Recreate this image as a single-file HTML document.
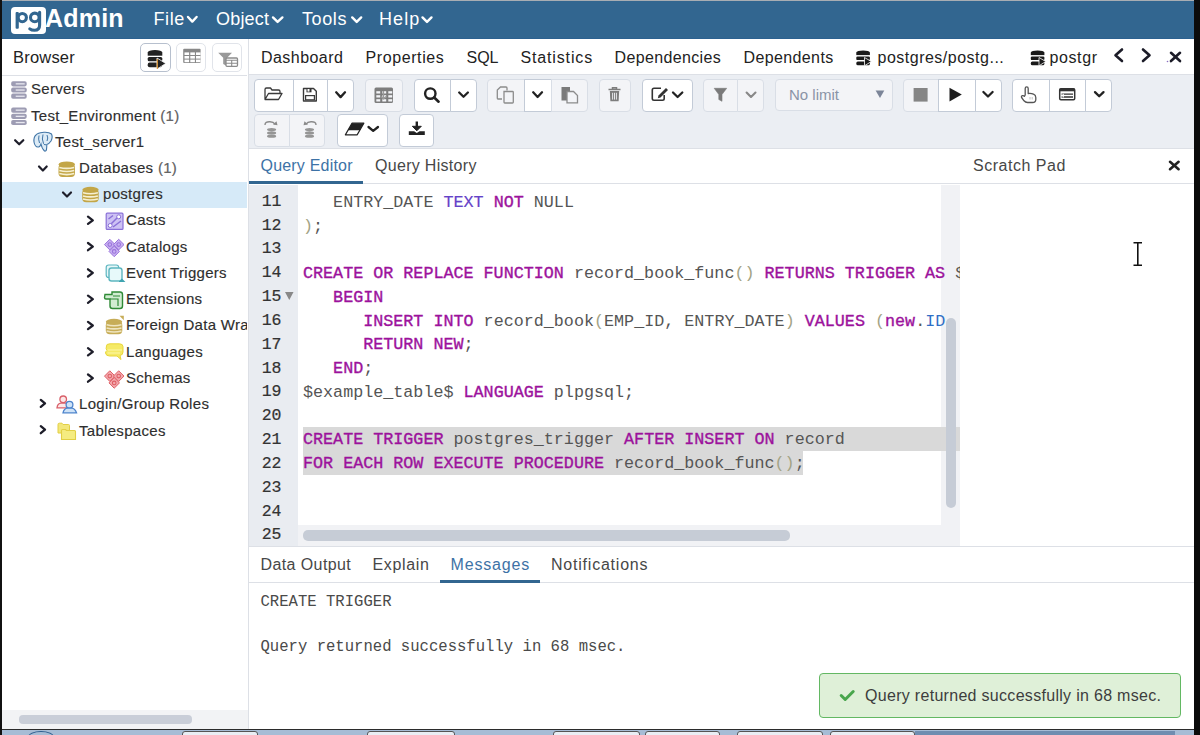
<!DOCTYPE html>
<html><head><meta charset="utf-8">
<style>
*{box-sizing:border-box;margin:0;padding:0}
html,body{width:1200px;height:735px;overflow:hidden;background:#fff;font-family:"Liberation Sans",sans-serif;color:#222}
.a{position:absolute}
#topline{left:0;top:0;width:1200px;height:1px;background:#a8adb3}
#lborder{left:0;top:0;width:1.6px;height:735px;background:#111}
#rborder{left:1194px;top:0;width:6px;height:735px;background:#0b0b0b}
#hdr{left:2px;top:1px;width:1192px;height:38px;background:#326690;border-bottom:1px solid #2c6190}
.logo{left:11px;top:7px;width:35px;height:27px;background:#fff;border-radius:4px}
.menu{color:#fff;font-size:18px;top:9px}
.chev{position:absolute}
/* browser panel */
#bpanel{left:2px;top:39px;width:245px;height:692px;background:#fff}
.tree{font-size:15px;letter-spacing:0.3px;color:#2e2e2e;white-space:nowrap;-webkit-text-stroke:0.15px #2e2e2e}
/* main */
#mainborder{left:247.5px;top:39px;width:1.5px;height:691px;background:#dde0e6}
.tab{font-size:16px;color:#222;top:48.5px;white-space:nowrap}
#tabsline{left:249px;top:74px;width:945px;height:1px;background:#dde0e6}
#toolbar{left:249px;top:75px;width:945px;height:73.5px;background:#ebeef3;border-bottom:1px solid #dde0e6}
.btn{position:absolute;background:#fff;border:1px solid #ccd2dc;border-radius:4px}
.btn.dis{background:#f3f4f7;border-color:#dde1e8}
#qtabs{left:249px;top:148.5px;width:945px;height:35.5px;background:#fff;border-bottom:1px solid #dde0e6}
#gutter{left:249px;top:185px;width:49px;height:361px;background:#e9ecf1}
.ln{position:absolute;font-family:"Liberation Mono",monospace;font-size:16.5px;color:#333;width:32.5px;text-align:right;left:249px;-webkit-text-stroke:0.2px #333}
.code{position:absolute;left:303px;font-family:"Liberation Mono",monospace;font-size:16.73px;color:#555;white-space:pre}
.k{color:#9c129c;-webkit-text-stroke:0.35px #9c129c}
.t{color:#6441c8;-webkit-text-stroke:0.2px #6441c8}
.p{color:#a3a385}
.b{color:#2f6fc6}
.code{left:5px}
#vtrack{left:941px;top:185px;width:19px;height:361px;background:#f1f2f5}
#vthumb{left:946px;top:318px;width:10px;height:190px;background:#c6ccd6;border-radius:5px}
#htrack{left:298px;top:525px;width:662px;height:21px;background:#f1f2f5}
#hthumb{left:303px;top:530px;width:487px;height:11px;background:#c6ccd6;border-radius:5px}
#btabs{left:249px;top:546px;width:945px;height:37px;background:#fff;border-top:1px solid #dde0e6;border-bottom:1px solid #dde0e6}
.msg{position:absolute;left:260.5px;font-family:"Liberation Mono",monospace;font-size:15.6px;color:#4a4a4a;white-space:pre}
#toast{left:819px;top:673px;width:362px;height:44.5px;background:#dff0d8;border:1.5px solid #63b863;border-radius:4px}
#bscroll{left:2px;top:710px;width:246px;height:20px;background:#f2f3f5}
#bthumb{left:19px;top:715px;width:173px;height:8.5px;background:#c9ced8;border-radius:4px}
#taskbar{left:0;top:729px;width:1200px;height:6px;background:#a6bcd5;border-top:1.5px solid #2b2b2b}
</style></head><body>
<div class="a" id="hdr"></div>
<div class="a" id="topline"></div>
<div class="a logo"></div>
<svg class="a" style="left:0;top:0" width="450" height="38" viewBox="0 0 450 38">
<rect x="15.6" y="12" width="3.2" height="16.8" rx="1" fill="#326690"/>
<circle cx="22.3" cy="17.6" r="4.1" fill="none" stroke="#326690" stroke-width="3.1"/>
<circle cx="34.8" cy="17.4" r="4.3" fill="none" stroke="#326690" stroke-width="3.1"/>
<path d="M39.6,12.2 V25 Q39.6,30.3 34.5,30.3 Q31.5,30.3 29.8,28.8" fill="none" stroke="#326690" stroke-width="3.1" stroke-linecap="round"/>
<path d="M188,17 L192.3,21.6 L196.6,17" fill="none" stroke="#fff" stroke-width="2.4" stroke-linecap="round" stroke-linejoin="round"/>
<path d="M273,17.4 L277.6,21.9 L282.4,17.4" fill="none" stroke="#fff" stroke-width="2.4" stroke-linecap="round" stroke-linejoin="round"/>
<path d="M352.2,17.4 L356.7,21.9 L361.2,17.4" fill="none" stroke="#fff" stroke-width="2.4" stroke-linecap="round" stroke-linejoin="round"/>
<path d="M422.5,17.4 L427,21.9 L431.5,17.4" fill="none" stroke="#fff" stroke-width="2.4" stroke-linecap="round" stroke-linejoin="round"/>
</svg>
<div class="a" style="left:45px;top:4px;font-size:25px;font-weight:bold;color:#fff;letter-spacing:0.2px">Admin</div>
<div class="a menu" style="left:153.5px;letter-spacing:0.6px">File</div>
<div class="a menu" style="left:216px;letter-spacing:0.2px">Object</div>
<div class="a menu" style="left:302px;letter-spacing:0.6px">Tools</div>
<div class="a menu" style="left:379px;letter-spacing:1.1px">Help</div>

<div class="a" id="bpanel"></div>
<div class="a" style="left:13px;top:48px;font-size:16.5px;color:#222;letter-spacing:0.2px">Browser</div>
<div class="btn" style="left:140px;top:42.8px;width:31px;height:29px;border:1.5px solid #b7c0ce;border-radius:5px"></div>
<div class="btn" style="left:176.3px;top:42.8px;width:29.6px;height:29px;border:1.5px solid #e1e4ea;border-radius:5px"></div>
<div class="btn" style="left:211.8px;top:42.8px;width:30.5px;height:29px;border:1.5px solid #e1e4ea;border-radius:5px"></div>
<div class="a" style="left:2px;top:75px;width:245px;height:1px;background:#dde0e6"></div>
<div class="a" style="left:2px;top:182px;width:245px;height:26px;background:#d6eaf8"></div>

<div class="a tree" style="left:31px;top:80px">Servers</div>
<div class="a tree" style="left:31px;top:107px">Test_Environment <span style="color:#666">(1)</span></div>
<div class="a tree" style="left:55px;top:133px">Test_server1</div>
<div class="a tree" style="left:79px;top:159px">Databases <span style="color:#666">(1)</span></div>
<div class="a tree" style="left:103px;top:185px">postgres</div>
<div class="a tree" style="left:126px;top:211px">Casts</div>
<div class="a tree" style="left:126px;top:237.8px">Catalogs</div>
<div class="a tree" style="left:126px;top:264px">Event Triggers</div>
<div class="a tree" style="left:126px;top:290px">Extensions</div>
<div class="a tree" style="left:126px;top:316px;width:121px;overflow:hidden">Foreign Data Wrappers</div>
<div class="a tree" style="left:126px;top:342.5px">Languages</div>
<div class="a tree" style="left:126px;top:369px">Schemas</div>
<div class="a tree" style="left:79px;top:395px">Login/Group Roles</div>
<div class="a tree" style="left:79px;top:421.5px">Tablespaces</div>

<!--TREE-->
<svg class="a" style="left:0;top:0" width="250" height="450" viewBox="0 0 250 450"><rect x="11.2" y="81.2" width="15.5" height="5.2" rx="1.8" fill="#9d9cb3"/><rect x="15.7" y="83.2" width="9" height="1.3" fill="#e8e8f0"/><rect x="11.2" y="87.4" width="15.5" height="5.2" rx="1.8" fill="#9d9cb3"/><rect x="15.7" y="89.4" width="9" height="1.3" fill="#e8e8f0"/><rect x="11.2" y="93.6" width="15.5" height="5.2" rx="1.8" fill="#9d9cb3"/><rect x="15.7" y="95.6" width="9" height="1.3" fill="#e8e8f0"/><rect x="11.2" y="107.5" width="15.5" height="5.2" rx="1.8" fill="#9d9cb3"/><rect x="15.7" y="109.5" width="9" height="1.3" fill="#e8e8f0"/><rect x="11.2" y="113.7" width="15.5" height="5.2" rx="1.8" fill="#9d9cb3"/><rect x="15.7" y="115.7" width="9" height="1.3" fill="#e8e8f0"/><rect x="11.2" y="119.9" width="15.5" height="5.2" rx="1.8" fill="#9d9cb3"/><rect x="15.7" y="121.9" width="9" height="1.3" fill="#e8e8f0"/><path d="M36,135 Q33.5,137 34,142 Q35,147.5 38.5,147 Q40,146.8 41,144 Q42,149 44.5,151 Q46,151.5 46.5,149.5 Q46.8,147 46.8,144.5 Q49,144 51,141 Q53,137 51.5,134 Q49,132 44,132.3 Q40,132.5 38,133.5 Q36.8,134 36,135 Z" fill="#dcebf6" stroke="#3f74a6" stroke-width="1.1"/><path d="M39,135.5 Q38,139 39.5,143 M43,134.5 Q41.5,139 43.5,143.5 Q45,146 46,144.5 M47,135 Q48.5,138 47,141" fill="none" stroke="#3f74a6" stroke-width="1"/><polyline points="15.1,140.2 19.2,144.3 23.3,140.2" fill="none" stroke="#1e1e2a" stroke-width="2.2" stroke-linecap="round" stroke-linejoin="round"/><polyline points="39.0,166.5 42.9,170.5 46.7,166.5" fill="none" stroke="#1e1e2a" stroke-width="2.2" stroke-linecap="round" stroke-linejoin="round"/><rect x="58.5" y="163.9" width="16.5" height="13.0" rx="4.0" fill="#c3a647"/><ellipse cx="66.8" cy="164.4" rx="8.2" ry="3" fill="#c3a647"/><path d="M59.3,167.4 Q66.8,169.4 74.2,167.4" fill="none" stroke="#f6f0d2" stroke-width="1.6"/><path d="M59.3,170.5 Q66.8,172.5 74.2,170.5" fill="none" stroke="#f6f0d2" stroke-width="1.6"/><path d="M59.3,173.6 Q66.8,175.6 74.2,173.6" fill="none" stroke="#f6f0d2" stroke-width="1.6"/><polyline points="63.0,192.5 67.0,196.5 71.0,192.5" fill="none" stroke="#1e1e2a" stroke-width="2.2" stroke-linecap="round" stroke-linejoin="round"/><rect x="82.2" y="189.3" width="16.5" height="13.0" rx="4.0" fill="#c3a647"/><ellipse cx="90.5" cy="189.8" rx="8.2" ry="3" fill="#c3a647"/><path d="M83.0,192.8 Q90.5,194.8 97.9,192.8" fill="none" stroke="#f6f0d2" stroke-width="1.6"/><path d="M83.0,195.9 Q90.5,197.9 97.9,195.9" fill="none" stroke="#f6f0d2" stroke-width="1.6"/><path d="M83.0,199.0 Q90.5,201.0 97.9,199.0" fill="none" stroke="#f6f0d2" stroke-width="1.6"/><polyline points="88.0,216.7 92.8,220.3 88.0,223.9" fill="none" stroke="#1e1e2a" stroke-width="2.3" stroke-linecap="round" stroke-linejoin="round"/><polyline points="88.0,243.0 92.8,246.6 88.0,250.2" fill="none" stroke="#1e1e2a" stroke-width="2.3" stroke-linecap="round" stroke-linejoin="round"/><polyline points="88.0,269.3 92.8,272.9 88.0,276.5" fill="none" stroke="#1e1e2a" stroke-width="2.3" stroke-linecap="round" stroke-linejoin="round"/><polyline points="88.0,295.6 92.8,299.2 88.0,302.8" fill="none" stroke="#1e1e2a" stroke-width="2.3" stroke-linecap="round" stroke-linejoin="round"/><polyline points="88.0,321.9 92.8,325.5 88.0,329.1" fill="none" stroke="#1e1e2a" stroke-width="2.3" stroke-linecap="round" stroke-linejoin="round"/><polyline points="88.0,348.2 92.8,351.8 88.0,355.4" fill="none" stroke="#1e1e2a" stroke-width="2.3" stroke-linecap="round" stroke-linejoin="round"/><polyline points="88.0,374.5 92.8,378.1 88.0,381.7" fill="none" stroke="#1e1e2a" stroke-width="2.3" stroke-linecap="round" stroke-linejoin="round"/><rect x="106.2" y="213.2" width="16.8" height="16.2" rx="1" fill="#cdc2f4" stroke="#8a70d8" stroke-width="1.2"/><path d="M108.5,219 L113,215.5 M111,224 L117,218 M113,227 L121,221" stroke="#8a70d8" stroke-width="1.5"/><circle cx="110.2" cy="225.5" r="2" fill="#fff" stroke="#8a70d8" stroke-width="1"/><circle cx="118.7" cy="216.8" r="2" fill="#fff" stroke="#8a70d8" stroke-width="1"/><path d="M109.8,239.3 L115.1,244.6 L109.8,249.9 L104.5,244.6 Z" fill="#c7b0f0" stroke="#9a72dc" stroke-width="1" stroke-linejoin="round"/><circle cx="109.8" cy="244.6" r="1.8" fill="none" stroke="#9a72dc" stroke-width="1.1"/><path d="M118.7,239.3 L124.0,244.6 L118.7,249.9 L113.4,244.6 Z" fill="#c7b0f0" stroke="#9a72dc" stroke-width="1" stroke-linejoin="round"/><circle cx="118.7" cy="244.6" r="1.8" fill="none" stroke="#9a72dc" stroke-width="1.1"/><path d="M114.2,246.1 L119.5,251.4 L114.2,256.7 L109.0,251.4 Z" fill="#c7b0f0" stroke="#9a72dc" stroke-width="1" stroke-linejoin="round"/><circle cx="114.2" cy="251.4" r="1.8" fill="none" stroke="#9a72dc" stroke-width="1.1"/><rect x="106.2" y="265" width="12.5" height="12.5" rx="2.5" fill="#e7f7f8" stroke="#5db6c0" stroke-width="1.2"/><rect x="109" y="268" width="13" height="13" rx="2.5" fill="#e7f9fa" stroke="#5db6c0" stroke-width="1.4"/><path d="M119,281.5 L124,281.5 L121.5,279" fill="#3fa3b0" stroke="#3fa3b0" stroke-width="1.2"/><path d="M105,294.5 H112 V292 H120 Q122.5,292 122.5,294.5 V306 Q122.5,308.5 120,308.5 H112.5 Q110,308.5 110,306 V299 H106 Q104.5,299 104.5,297.5 Z" fill="#d1ecd1" stroke="#2f8a36" stroke-width="1.4"/><path d="M110,299 H118 V306 M113,296 H120" fill="none" stroke="#2f8a36" stroke-width="1.2"/><rect x="105.8" y="321.3" width="16.5" height="13.0" rx="4.0" fill="#c7ad58"/><ellipse cx="114.0" cy="321.8" rx="8.2" ry="3" fill="#c7ad58"/><path d="M106.6,324.8 Q114.0,326.8 121.5,324.8" fill="none" stroke="#efe5c0" stroke-width="1.6"/><path d="M106.6,327.9 Q114.0,329.9 121.5,327.9" fill="none" stroke="#efe5c0" stroke-width="1.6"/><path d="M106.6,331.0 Q114.0,333.0 121.5,331.0" fill="none" stroke="#efe5c0" stroke-width="1.6"/><path d="M119.5,315.8 L123.8,315.8 L123.8,320.2 Z" fill="#c7ad58"/><path d="M106.5,346 Q106,344 110,343.8 H119.5 Q123,344 123,346.5 V352 Q123,355 120,355.5 L121,359.5 L117,356 H109.5 Q106,356 105.5,353 Q105.5,351.5 107,350.5 Q105.5,349 106.5,346 Z" fill="#f5ea66" stroke="#e8d63a" stroke-width="1"/><path d="M107.5,350 H122 M107.5,353 H120" stroke="#fff9b0" stroke-width="0.9"/><path d="M109.8,370.8 L115.1,376.1 L109.8,381.4 L104.5,376.1 Z" fill="#f3a9ad" stroke="#df5f66" stroke-width="1" stroke-linejoin="round"/><circle cx="109.8" cy="376.1" r="1.8" fill="none" stroke="#df5f66" stroke-width="1.1"/><path d="M118.7,370.8 L124.0,376.1 L118.7,381.4 L113.4,376.1 Z" fill="#f3a9ad" stroke="#df5f66" stroke-width="1" stroke-linejoin="round"/><circle cx="118.7" cy="376.1" r="1.8" fill="none" stroke="#df5f66" stroke-width="1.1"/><path d="M114.2,377.6 L119.5,382.9 L114.2,388.2 L109.0,382.9 Z" fill="#f3a9ad" stroke="#df5f66" stroke-width="1" stroke-linejoin="round"/><circle cx="114.2" cy="382.9" r="1.8" fill="none" stroke="#df5f66" stroke-width="1.1"/><polyline points="40.8,399.9 45.0,403.4 40.8,406.9" fill="none" stroke="#1e1e2a" stroke-width="2.3" stroke-linecap="round" stroke-linejoin="round"/><circle cx="63.2" cy="399.3" r="3.3" fill="#fde8e8" stroke="#d9606a" stroke-width="1.3"/><path d="M57,407.8 Q57.5,403.5 61,403.2 H65.5 Q69,403.5 69.5,407.8 Z" fill="#fde8e8" stroke="#d9606a" stroke-width="1.3"/><circle cx="69.5" cy="404.8" r="3.4" fill="#cfe3f7" stroke="#4d84cc" stroke-width="1.3"/><path d="M63,412.8 Q64,408.5 67.3,408.2 H71.8 Q75,408.5 76.5,412.8 Z" fill="#cfe3f7" stroke="#4d84cc" stroke-width="1.3"/><polyline points="40.8,426.2 45.0,429.7 40.8,433.2" fill="none" stroke="#1e1e2a" stroke-width="2.3" stroke-linecap="round" stroke-linejoin="round"/><path d="M58,424.5 Q58,423.2 59.3,423.2 H62 L63,424.5 H68.5 Q69.5,424.5 69.5,425.5 V433 H58 Z" fill="#f3e77a" stroke="#e2cf45" stroke-width="1"/><path d="M61.5,430.5 Q61.5,429.5 62.5,429.5 H65.5 L66.5,430.5 H74.5 Q75.5,430.5 75.5,431.5 V439.5 H61.5 Z" fill="#f5ec80" stroke="#e2cf45" stroke-width="1.1"/><ellipse cx="155" cy="52.5" rx="7.3" ry="2.6" fill="#222"/><rect x="147.7" y="52.5" width="14.6" height="3.2" fill="#222"/><rect x="147.7" y="57" width="14.6" height="4.3" rx="1.5" fill="#222"/><rect x="147.7" y="62.5" width="14.6" height="4.8" rx="2" fill="#222"/><path d="M157,58 L165.8,63.5 L157,69 Z" fill="#222" stroke="#fff" stroke-width="0.8"/><line x1="157.3" y1="59" x2="157.3" y2="69" stroke="#e0922a" stroke-width="1.1"/><rect x="183.2" y="48.8" width="17.4" height="14.2" rx="1" fill="#888"/><rect x="184.5" y="52.4" width="4.6" height="2.6" fill="#fff"/><rect x="190.3" y="52.4" width="4.6" height="2.6" fill="#fff"/><rect x="196.0" y="52.4" width="4.6" height="2.6" fill="#fff"/><rect x="184.5" y="56.0" width="4.6" height="2.6" fill="#fff"/><rect x="190.3" y="56.0" width="4.6" height="2.6" fill="#fff"/><rect x="196.0" y="56.0" width="4.6" height="2.6" fill="#fff"/><rect x="184.5" y="59.6" width="4.6" height="2.6" fill="#fff"/><rect x="190.3" y="59.6" width="4.6" height="2.6" fill="#fff"/><rect x="196.0" y="59.6" width="4.6" height="2.6" fill="#fff"/><path d="M218.2,52.8 H232 L227.2,57.8 V66.2 L223.2,64 V57.8 Z" fill="#999"/><rect x="226" y="58" width="11.5" height="8.3" rx="1" fill="#fff" stroke="#8c8c8c" stroke-width="1.3"/><path d="M226,60.2 H237.5 M226,63.2 H237.5 M231.7,60 V66" stroke="#8c8c8c" stroke-width="1.1"/></svg>
<!--/TREE-->
<div class="a" id="bscroll"></div>
<div class="a" id="bthumb"></div>

<div class="a" id="mainborder"></div>
<div class="a tab" style="left:261px;letter-spacing:0.45px">Dashboard</div>
<div class="a tab" style="left:365.5px;letter-spacing:0.6px">Properties</div>
<div class="a tab" style="left:466.5px;letter-spacing:0px">SQL</div>
<div class="a tab" style="left:520.5px;letter-spacing:0.85px">Statistics</div>
<div class="a tab" style="left:614.5px;letter-spacing:0.35px">Dependencies</div>
<div class="a tab" style="left:743.5px;letter-spacing:0.38px">Dependents</div>
<div class="a tab" style="left:877.5px;letter-spacing:0.5px">postgres/postg...</div>
<div class="a tab" style="left:1049.5px;letter-spacing:0.6px">postgr</div>
<div class="a" id="tabsline"></div>
<div class="a" id="toolbar"></div>
<!--TB-->
<div class="a" style="left:253.5px;top:79.0px;width:40.6px;height:33.0px;background:#fff;border:1.4px solid #c3cbd7;border-radius:4px 0px 0px 4px"></div>
<div class="a" style="left:292.8px;top:79.0px;width:35.6px;height:33.0px;background:#fff;border:1.4px solid #c3cbd7;border-radius:0px 0px 0px 0px"></div>
<div class="a" style="left:327.0px;top:79.0px;width:27.0px;height:33.0px;background:#fff;border:1.4px solid #c3cbd7;border-radius:0px 4px 4px 0px"></div>
<div class="a" style="left:364.5px;top:79.0px;width:38.5px;height:33.0px;background:#f3f4f7;border:1.4px solid #d9dee6;border-radius:4px 4px 4px 4px"></div>
<div class="a" style="left:414.0px;top:79.0px;width:36.9px;height:33.0px;background:#fff;border:1.4px solid #c3cbd7;border-radius:4px 0px 0px 4px"></div>
<div class="a" style="left:449.5px;top:79.0px;width:27.0px;height:33.0px;background:#fff;border:1.4px solid #c3cbd7;border-radius:0px 4px 4px 0px"></div>
<div class="a" style="left:487.0px;top:79.0px;width:38.4px;height:33.0px;background:#f3f4f7;border:1.4px solid #d9dee6;border-radius:4px 0px 0px 4px"></div>
<div class="a" style="left:524.0px;top:79.0px;width:27.9px;height:33.0px;background:#fff;border:1.4px solid #c3cbd7;border-radius:0px 0px 0px 0px"></div>
<div class="a" style="left:550.5px;top:79.0px;width:37.5px;height:33.0px;background:#f3f4f7;border:1.4px solid #d9dee6;border-radius:0px 4px 4px 0px"></div>
<div class="a" style="left:598.5px;top:79.0px;width:32.5px;height:33.0px;background:#f3f4f7;border:1.4px solid #d9dee6;border-radius:4px 4px 4px 4px"></div>
<div class="a" style="left:642.0px;top:79.0px;width:50.5px;height:33.0px;background:#fff;border:1.4px solid #c3cbd7;border-radius:4px 4px 4px 4px"></div>
<div class="a" style="left:703.0px;top:79.0px;width:35.4px;height:33.0px;background:#f3f4f7;border:1.4px solid #d9dee6;border-radius:4px 0px 0px 4px"></div>
<div class="a" style="left:737.0px;top:79.0px;width:27.0px;height:33.0px;background:#f3f4f7;border:1.4px solid #d9dee6;border-radius:0px 4px 4px 0px"></div>
<div class="a" style="left:774.5px;top:79.0px;width:118.0px;height:31.5px;background:#f3f4f7;border:1.4px solid #d9dee6;border-radius:4px 4px 4px 4px"></div>
<div class="a" style="left:903.0px;top:79.0px;width:35.9px;height:33.0px;background:#f3f4f7;border:1.4px solid #d9dee6;border-radius:4px 0px 0px 4px"></div>
<div class="a" style="left:937.5px;top:79.0px;width:38.9px;height:33.0px;background:#fff;border:1.4px solid #c3cbd7;border-radius:0px 0px 0px 0px"></div>
<div class="a" style="left:975.0px;top:79.0px;width:26.5px;height:33.0px;background:#fff;border:1.4px solid #c3cbd7;border-radius:0px 4px 4px 0px"></div>
<div class="a" style="left:1012.0px;top:79.0px;width:38.4px;height:33.0px;background:#fff;border:1.4px solid #c3cbd7;border-radius:4px 0px 0px 4px"></div>
<div class="a" style="left:1049.0px;top:79.0px;width:37.4px;height:33.0px;background:#fff;border:1.4px solid #c3cbd7;border-radius:0px 0px 0px 0px"></div>
<div class="a" style="left:1085.0px;top:79.0px;width:27.0px;height:33.0px;background:#fff;border:1.4px solid #c3cbd7;border-radius:0px 4px 4px 0px"></div>
<div class="a" style="left:253.5px;top:114.0px;width:36.4px;height:32.5px;background:#f3f4f7;border:1.4px solid #d9dee6;border-radius:4px 0px 0px 4px"></div>
<div class="a" style="left:288.5px;top:114.0px;width:36.5px;height:32.5px;background:#f3f4f7;border:1.4px solid #d9dee6;border-radius:0px 4px 4px 0px"></div>
<div class="a" style="left:336.5px;top:114.0px;width:51.5px;height:32.5px;background:#fff;border:1.4px solid #c3cbd7;border-radius:4px 4px 4px 4px"></div>
<div class="a" style="left:399.0px;top:114.0px;width:35.0px;height:32.5px;background:#fff;border:1.4px solid #c3cbd7;border-radius:4px 4px 4px 4px"></div>
<svg class="a" style="left:0;top:0" width="1200" height="160" viewBox="0 0 1200 160"><path d="M265,99 V89.5 Q265,88 266.5,88 H270.5 L272,90 H278.5 Q280,90 280,91.5 V93 M265,99.5 L268.5,93.5 H282 L278.5,99.5 Z" fill="none" stroke="#3a3a3a" stroke-width="1.3" stroke-linejoin="round"/><path d="M303.5,88.5 H313.5 L316.3,91.3 V101 H303.5 Z" fill="none" stroke="#3a3a3a" stroke-width="1.4" stroke-linejoin="round"/><rect x="306.5" y="88.5" width="5" height="3.8" fill="#333"/><rect x="307.5" y="89" width="2" height="2.6" fill="#fff"/><rect x="305.6" y="95.6" width="8.8" height="4.2" fill="none" stroke="#3a3a3a" stroke-width="1.2"/><polyline points="336.2,92.3 340.6,97.1 345.0,92.3" fill="none" stroke="#222" stroke-width="2.3" stroke-linecap="round" stroke-linejoin="round"/><rect x="374.5" y="87.5" width="18.5" height="15.5" rx="1.5" fill="#7d7d7d"/><rect x="376.3" y="91.2" width="3.9" height="2.3" fill="#f3f4f7"/><rect x="382.3" y="91.2" width="3.9" height="2.3" fill="#f3f4f7"/><rect x="388.3" y="91.2" width="3.9" height="2.3" fill="#f3f4f7"/><rect x="376.3" y="95.2" width="3.9" height="2.3" fill="#f3f4f7"/><rect x="382.3" y="95.2" width="3.9" height="2.3" fill="#f3f4f7"/><rect x="388.3" y="95.2" width="3.9" height="2.3" fill="#f3f4f7"/><rect x="376.3" y="99.2" width="3.9" height="2.3" fill="#f3f4f7"/><rect x="382.3" y="99.2" width="3.9" height="2.3" fill="#f3f4f7"/><rect x="388.3" y="99.2" width="3.9" height="2.3" fill="#f3f4f7"/><path d="M383.5,91 V99 M381,96.5 L383.5,99 L386,96.5" stroke="#9a9a9a" stroke-width="1.2" fill="none"/><circle cx="430.3" cy="93.6" r="5.2" fill="none" stroke="#222" stroke-width="2.4"/><line x1="434.2" y1="97.5" x2="438.6" y2="101.7" stroke="#222" stroke-width="2.6" stroke-linecap="round"/><polyline points="459.2,92.5 463.5,96.8 467.9,92.5" fill="none" stroke="#222" stroke-width="2.3" stroke-linecap="round" stroke-linejoin="round"/><path d="M502,99 H498 Q497.3,99 497.3,98.3 V90 L500.5,87 H506 Q507,87 507,88 V90.5" fill="none" stroke="#8c8c8c" stroke-width="1.3"/><path d="M504,91.5 H512.5 Q513.3,91.5 513.3,92.3 V102.3 Q513.3,103 512.5,103 H504.8 Q504,103 504,102.3 Z" fill="none" stroke="#8c8c8c" stroke-width="1.3"/><polyline points="533.2,92.3 537.6,97.0 542.0,92.3" fill="none" stroke="#222" stroke-width="2.3" stroke-linecap="round" stroke-linejoin="round"/><path d="M561.5,87 H570 V91.5 H567 V100.5 H561.5 Z" fill="#7a7a7a"/><path d="M567,91.5 H573.5 L577.5,95.5 V102.8 H567 Z" fill="#f3f4f7" stroke="#8c8c8c" stroke-width="1.3"/><path d="M608.5,89.5 H620.5 M612.5,89.5 V87.8 H616.5 V89.5" fill="none" stroke="#7d7d7d" stroke-width="1.5"/><path d="M609.8,91 H619.2 L618.6,101.2 H610.4 Z" fill="#7d7d7d"/><path d="M612.6,92.8 V99.6 M614.5,92.8 V99.6 M616.4,92.8 V99.6" stroke="#f3f4f7" stroke-width="0.9"/><path d="M661,88.2 H654 Q652.3,88.2 652.3,90 V98.5 Q652.3,100.2 654,100.2 H662.5 Q664.2,100.2 664.2,98.5 V95" fill="none" stroke="#333" stroke-width="1.6"/><path d="M658.5,95.5 L666,88 L668,90 L660.5,97.5 L657.8,98.2 Z" fill="#333"/><polyline points="673.0,92.5 677.6,97.0 682.3,92.5" fill="none" stroke="#222" stroke-width="2.3" stroke-linecap="round" stroke-linejoin="round"/><path d="M714.2,88.3 H726.7 L722,94.5 V101.3 L718.8,99.5 V94.5 Z" fill="#7a7a7a" stroke="#7a7a7a" stroke-width="0.6" stroke-linejoin="round"/><polyline points="746.6,92.5 751.0,97.0 755.5,92.5" fill="none" stroke="#888" stroke-width="2.1" stroke-linecap="round" stroke-linejoin="round"/><path d="M875.6,90.4 H884.3 L880,98 Z" fill="#7c8598"/><rect x="913.6" y="88" width="14" height="13.6" fill="#858585"/><path d="M949.5,87.8 L961.8,94.6 L949.5,101.5 Z" fill="#1e1e1e"/><polyline points="983.4,92.0 988.0,96.5 992.6,92.0" fill="none" stroke="#222" stroke-width="2.3" stroke-linecap="round" stroke-linejoin="round"/><path d="M1025.2,95 V88.6 Q1025.2,86.9 1026.7,86.9 Q1028.2,86.9 1028.2,88.6 V93.5 Q1031,93 1033.5,94.2 Q1035.8,95 1035.8,97.5 V99.5 Q1035.8,102.5 1032.5,102.5 H1027.5 Q1025.5,102.5 1024,100.8 L1021.6,97.5 Q1021,96.2 1022.3,95.7 Q1023.5,95.3 1024.4,96.3 Z" fill="none" stroke="#555" stroke-width="1.3" stroke-linejoin="round"/><path d="M1030,97 V99.5 M1032.2,97 V99.5" stroke="#bbb" stroke-width="0.9"/><rect x="1059.7" y="88.7" width="15" height="11" rx="1.2" fill="none" stroke="#333" stroke-width="1.5"/><rect x="1059.7" y="88.7" width="15" height="2.6" fill="#333"/><path d="M1061.6,94.2 H1073 M1061.6,97 H1073" stroke="#333" stroke-width="1.3"/><path d="M1063.2,93.8 V97.4" stroke="#fff" stroke-width="1.2"/><polyline points="1095.0,92.1 1099.2,96.3 1103.5,92.1" fill="none" stroke="#222" stroke-width="2.3" stroke-linecap="round" stroke-linejoin="round"/><ellipse cx="271.6" cy="129.6" rx="4.6" ry="1.6" fill="#959595"/><ellipse cx="271.6" cy="132.9" rx="4.6" ry="1.6" fill="#959595"/><ellipse cx="271.6" cy="136.2" rx="4.6" ry="1.6" fill="#959595"/><path d="M265,125 Q265,121.5 270,121.8 Q273.5,122 275,124.2" fill="none" stroke="#8a8a8a" stroke-width="1.4"/><path d="M273,124.5 L277.5,125.2 L276.5,121.3 Z" fill="#8a8a8a"/><ellipse cx="309.5" cy="129.6" rx="4.6" ry="1.6" fill="#959595"/><ellipse cx="309.5" cy="132.9" rx="4.6" ry="1.6" fill="#959595"/><ellipse cx="309.5" cy="136.2" rx="4.6" ry="1.6" fill="#959595"/><path d="M316,125 Q316,121.5 311,121.8 Q307.5,122 306,124.2" fill="none" stroke="#8a8a8a" stroke-width="1.4"/><path d="M308,124.5 L303.5,125.2 L304.5,121.3 Z" fill="#8a8a8a"/><path d="M352,123.2 H363.8 L357.2,134.8 H345.4 Z" fill="#fff" stroke="#222" stroke-width="1.3" stroke-linejoin="round"/><path d="M352,123.2 H363.8 L359.8,130.2 H348 Z" fill="#222"/><polyline points="368.5,127.0 373.2,130.9 378.0,127.0" fill="none" stroke="#222" stroke-width="2.3" stroke-linecap="round" stroke-linejoin="round"/><path d="M416.8,121.5 V128.5" stroke="#222" stroke-width="2.4"/><path d="M412.3,126.3 L416.8,130.8 L421.3,126.3 Z" fill="#222" stroke="#222" stroke-width="1" stroke-linejoin="round"/><path d="M408.8,131.2 V135 H424.8 V131.2 H419.5 L416.8,133 L414.1,131.2 Z" fill="#222"/></svg>
<div class="a" style="left:789px;top:86px;font-size:15px;color:#8a93a6">No limit</div>
<!--/TB-->

<div class="a" id="qtabs"></div>
<div class="a" style="left:260.5px;top:156.5px;font-size:16px;letter-spacing:0.2px;color:#3d72a6">Query Editor</div>
<div class="a" style="left:375px;top:156.5px;font-size:16px;letter-spacing:0.3px;color:#474747">Query History</div>
<div class="a" style="left:249px;top:181px;width:114px;height:3px;background:#326690"></div>
<div class="a" style="left:973px;top:156.5px;font-size:16px;letter-spacing:0.52px;color:#474747">Scratch Pad</div>

<div class="a" id="gutter"></div>
<div class="ln" style="top:191.80px">11</div>
<div class="ln" style="top:215.63px">12</div>
<div class="ln" style="top:239.46px">13</div>
<div class="ln" style="top:263.29px">14</div>
<div class="ln" style="top:287.12px">15</div>
<div class="ln" style="top:310.95px">16</div>
<div class="ln" style="top:334.78px">17</div>
<div class="ln" style="top:358.61px">18</div>
<div class="ln" style="top:382.44px">19</div>
<div class="ln" style="top:406.27px">20</div>
<div class="ln" style="top:430.10px">21</div>
<div class="ln" style="top:453.93px">22</div>
<div class="ln" style="top:477.76px">23</div>
<div class="ln" style="top:501.59px">24</div>
<div class="ln" style="top:525.42px">25</div>

<div class="a" id="vtrack"></div>
<div class="a" id="codeclip" style="left:298px;top:185px;width:662px;height:361px;overflow:hidden">
<div class="a" style="left:5px;top:242px;width:657px;height:24px;background:#d9d9d9"></div>
<div class="a" style="left:5px;top:266px;width:500px;height:24px;background:#d9d9d9"></div>
<div class="code" style="top:8.00px">   ENTRY_DATE <span class="t">TEXT</span> <span class="k">NOT</span> NULL</div>
<div class="code" style="top:31.72px"><span class="p">)</span>;</div>
<div class="code" style="top:55.44px"></div>
<div class="code" style="top:79.16px"><span class="k">CREATE OR REPLACE FUNCTION</span> record_book_func<span class="p">()</span> <span class="k">RETURNS TRIGGER AS</span> $example_table$</div>
<div class="code" style="top:102.88px">   <span class="k">BEGIN</span></div>
<div class="code" style="top:126.60px">      <span class="k">INSERT INTO</span> record_book<span class="p">(</span>EMP_ID, ENTRY_DATE<span class="p">)</span> <span class="k">VALUES</span> <span class="p">(</span><span class="k">new</span>.<span class="b">ID</span>, new.EMP_ID)</div>
<div class="code" style="top:150.32px">      <span class="k">RETURN NEW</span>;</div>
<div class="code" style="top:174.04px">   <span class="k">END</span>;</div>
<div class="code" style="top:197.76px">$example_table$ <span class="k">LANGUAGE</span> plpgsql;</div>
<div class="code" style="top:221.48px"></div>
<div class="code" style="top:245.20px"><span class="sel1"><span class="k">CREATE TRIGGER</span> postgres_trigger <span class="k">AFTER INSERT ON</span> record</span></div>
<div class="code" style="top:268.92px"><span class="sel2"><span class="k">FOR EACH ROW EXECUTE PROCEDURE</span> record_book_func<span class="p">()</span>;</span></div>
<div class="code" style="top:292.64px"></div>
<div class="code" style="top:316.36px"></div>
<div class="code" style="top:340.08px"></div>
</div>
<div class="a" id="vthumb"></div>
<div class="a" id="htrack"></div>
<div class="a" id="hthumb"></div>

<div class="a" id="btabs"></div>
<div class="a" style="left:260.5px;top:555.5px;font-size:16px;letter-spacing:0.4px;color:#474747">Data Output</div>
<div class="a" style="left:372.5px;top:555.5px;font-size:16px;letter-spacing:0.65px;color:#474747">Explain</div>
<div class="a" style="left:450.5px;top:555.5px;font-size:16px;letter-spacing:0.84px;color:#3d72a6">Messages</div>
<div class="a" style="left:551px;top:555.5px;font-size:16px;letter-spacing:0.78px;color:#474747">Notifications</div>
<div class="a" style="left:440px;top:580px;width:100px;height:3px;background:#326690"></div>
<div class="msg" style="top:592.5px">CREATE TRIGGER</div>
<div class="msg" style="top:637.5px">Query returned successfully in 68 msec.</div>

<div class="a" id="toast"></div>
<div class="a" style="left:865px;top:687px;font-size:16px;letter-spacing:0.3px;color:#3d3d3d">Query returned successfully in 68 msec.</div>

<!--MISC-->
<svg class="a" style="left:0;top:0" width="1200" height="735" viewBox="0 0 1200 735"><ellipse cx="863.1" cy="52.6" rx="6.8" ry="2.2" fill="#1a1a1a"/><rect x="856.3" y="52.6" width="13.6" height="2.5" fill="#1a1a1a"/><rect x="856.3" y="56.5" width="13.6" height="3.6" rx="1.2" fill="#1a1a1a"/><rect x="856.3" y="61.5" width="13.6" height="3.8" rx="1.5" fill="#1a1a1a"/><path d="M864.5,57.5 L871.3,61.5 L864.5,65.8 Z" fill="#1a1a1a" stroke="#fff" stroke-width="0.8"/><ellipse cx="1037.6" cy="52.6" rx="6.8" ry="2.2" fill="#1a1a1a"/><rect x="1030.8" y="52.6" width="13.6" height="2.5" fill="#1a1a1a"/><rect x="1030.8" y="56.5" width="13.6" height="3.6" rx="1.2" fill="#1a1a1a"/><rect x="1030.8" y="61.5" width="13.6" height="3.8" rx="1.5" fill="#1a1a1a"/><path d="M1039.0,57.5 L1045.8,61.5 L1039.0,65.8 Z" fill="#1a1a1a" stroke="#fff" stroke-width="0.8"/><polyline points="1122,49.5 1115.5,55.3 1122,61" fill="none" stroke="#1c1c28" stroke-width="2.6" stroke-linecap="round" stroke-linejoin="round"/><polyline points="1143,49.5 1149.5,55.3 1143,61" fill="none" stroke="#1c1c28" stroke-width="2.6" stroke-linecap="round" stroke-linejoin="round"/><path d="M1171,52.8 L1180,61 M1180,52.8 L1171,61" stroke="#1c1c28" stroke-width="2.6" stroke-linecap="round"/><circle cx="1167.5" cy="61.5" r="0.8" fill="#8a6fc0"/><path d="M1170,161.8 L1178.6,169.2 M1178.6,161.8 L1170,169.2" stroke="#222" stroke-width="2.6" stroke-linecap="round"/><path d="M285,292 H293.5 L289.25,300 Z" fill="#888"/><path d="M1133,242.8 H1142.6 M1137.8,242.8 V265.3 M1133,265.3 H1142.6" stroke="#fff" stroke-width="3.6"/><path d="M1133.5,242.8 H1142 M1137.8,242.8 V265.3 M1133.5,265.3 H1142" stroke="#111" stroke-width="1.6"/><polyline points="841.2,695.5 845.2,699.5 853.2,691.5" fill="none" stroke="#48a64c" stroke-width="3" stroke-linecap="round" stroke-linejoin="round"/></svg>
<!--/MISC-->
<div class="a" id="taskbar"></div>
<div class="a" style="left:182px;top:731px;width:76px;height:6px;background:#e9eef4;border:1px solid #555;border-radius:3px 3px 0 0"></div><div class="a" style="left:367px;top:731px;width:88px;height:6px;background:#e9eef4;border:1px solid #555;border-radius:3px 3px 0 0"></div><div class="a" style="left:553px;top:731px;width:87px;height:6px;background:#e9eef4;border:1px solid #555;border-radius:3px 3px 0 0"></div><div class="a" style="left:645px;top:731px;width:75px;height:6px;background:#e9eef4;border:1px solid #555;border-radius:3px 3px 0 0"></div><div class="a" style="left:737px;top:731px;width:86px;height:6px;background:#e9eef4;border:1px solid #555;border-radius:3px 3px 0 0"></div><div class="a" style="left:830px;top:731px;width:85px;height:6px;background:#e9eef4;border:1px solid #555;border-radius:3px 3px 0 0"></div><div class="a" style="left:915px;top:731px;width:260px;height:4px;background:#6f8db0"></div><div class="a" style="left:28px;top:731px;width:26px;height:12px;border:1.5px solid #2e5d8e;border-radius:50%"></div>
<div class="a" id="lborder"></div>
<div class="a" id="rborder"></div>
</body></html>
